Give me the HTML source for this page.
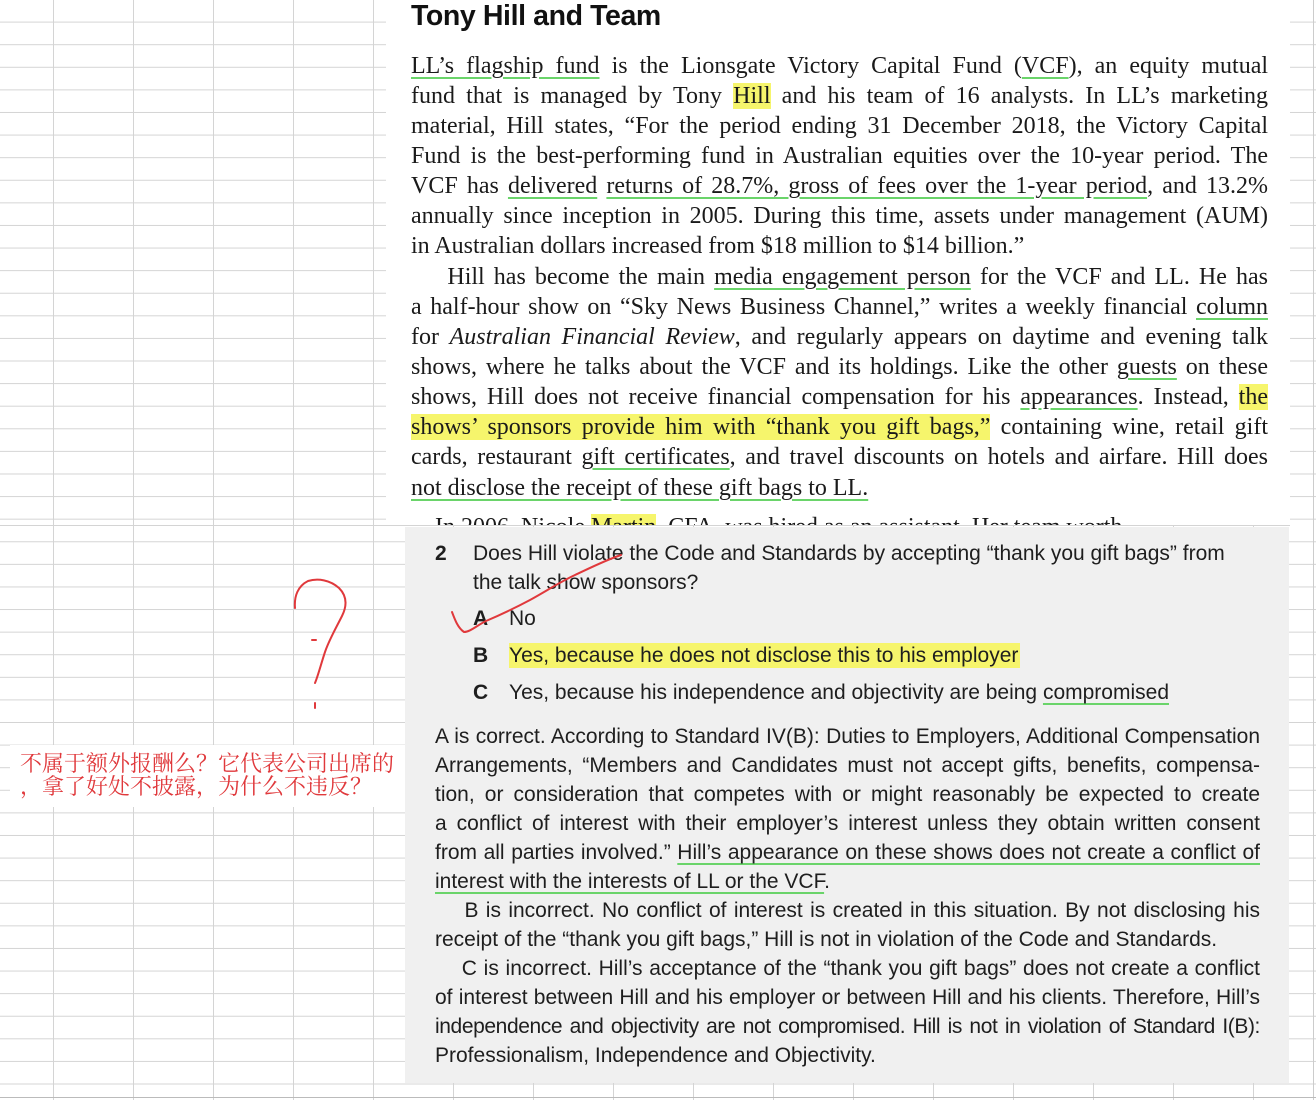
<!DOCTYPE html>
<html><head><meta charset="utf-8"><style>
html,body{margin:0;padding:0}
body{width:1316px;height:1100px;position:relative;overflow:hidden;background-color:#fff;
background-image:linear-gradient(to right,transparent 53px,#d4d4d4 53px,#d4d4d4 54px,transparent 54px),linear-gradient(to bottom,transparent 21.6px,#d4d4d4 21.6px,#d4d4d4 22.6px,transparent 22.6px);
background-size:80px 100%,100% 22.6px;}
.top{position:absolute;left:386px;top:0;width:904px;height:525px;background:#fff;}
.panel{position:absolute;left:405px;top:527px;width:884px;height:556px;background:#f0f0f0;}
.s{position:absolute;left:411px;width:857px;font-family:"Liberation Serif",serif;font-size:24px;color:#1a1a1a;white-space:nowrap;line-height:30px;height:30px}
.j{text-align:justify;text-align-last:justify;white-space:normal}
.m{position:absolute;font-family:"Liberation Sans",sans-serif;font-size:21px;color:#1e1e1e;white-space:nowrap;line-height:29px;height:29px}
.mj{left:435px;width:825px;text-align:justify;text-align-last:justify;white-space:normal}
.u{text-decoration:underline;text-decoration-color:#6ad46a;text-decoration-thickness:2px;text-underline-offset:4px}
.h{background:#f6f56c}
.lb{font-weight:bold;position:absolute;left:473px}
.zh{position:absolute;left:20px;font-family:"Noto Serif CJK SC","WenQuanYi Zen Hei",serif;font-size:22px;color:#e0393c;white-space:nowrap;line-height:23px}
</style></head><body>
<div style="position:absolute;right:2px;top:0;width:1px;height:1100px;background:#ccc"></div>
<div style="position:absolute;left:0;top:1097px;width:1316px;height:1px;background:#bbb"></div>
<div class="top"></div>
<div style="position:absolute;left:411px;top:0px;font-family:'Liberation Sans',sans-serif;font-weight:bold;font-size:28.5px;color:#111;letter-spacing:-0.4px">Tony Hill and Team</div>
<div class="s j" style="top:51px"><span class="u">LL’s flagship fund</span> is the Lionsgate Victory Capital Fund (<span class="u">VCF</span>), an equity mutual</div>
<div class="s j" style="top:81px">fund that is managed by Tony <span class="h">Hill</span> and his team of 16 analysts. In LL’s marketing</div>
<div class="s j" style="top:111px">material, Hill states, “For the period ending 31 December 2018, the Victory Capital</div>
<div class="s j" style="top:141px">Fund is the best-performing fund in Australian equities over the 10-year period. The</div>
<div class="s j" style="top:171px">VCF has <span class="u">delivered</span> <span class="u">returns of 28.7%, gross of fees over the 1-year period</span>, and 13.2%</div>
<div class="s j" style="top:201px">annually since inception in 2005. During this time, assets under management (AUM)</div>
<div class="s" style="top:231px">in Australian dollars increased from $18 million to $14 billion.”</div>
<div class="s j" style="top:262px">&nbsp;&nbsp;&nbsp;&nbsp;Hill has become the main <span class="u">media engagement person</span> for the VCF and LL. He has</div>
<div class="s j" style="top:292px">a half-hour show on “Sky News Business Channel,” writes a weekly financial <span class="u">column</span></div>
<div class="s j" style="top:322px">for <i>Australian Financial Review</i>, and regularly appears on daytime and evening talk</div>
<div class="s j" style="top:352px">shows, where he talks about the VCF and its holdings. Like the other <span class="u">guests</span> on these</div>
<div class="s j" style="top:382px">shows, Hill does not receive financial compensation for his <span class="u">appearances</span>. Instead, <span class="h">the</span></div>
<div class="s j" style="top:412px"><span class="h">shows’ sponsors provide him with “thank you gift bags,”</span> containing wine, retail gift</div>
<div class="s j" style="top:442px">cards, restaurant <span class="u">gift certificates</span>, and travel discounts on hotels and airfare. Hill does</div>
<div class="s" style="top:473px"><span class="u">not disclose the receipt of these gift bags to LL.</span></div>
<div style="position:absolute;left:386px;top:512px;width:904px;height:13px;overflow:hidden"><div class="s" style="left:25px;top:0;line-height:30px">&nbsp;&nbsp;&nbsp;&nbsp;In 2006, Nicole <span class="h">Martin</span>, CFA, was hired as an assistant. Her team worth</div></div>
<div style="position:absolute;left:0;top:525px;width:1290px;height:1px;background:#d4d4d4"></div>
<div class="panel"></div>
<div class="m" style="left:435px;top:539px;font-weight:bold">2</div>
<div class="m" style="left:473px;top:539px">Does Hill violate the Code and Standards by accepting “thank you gift bags” from</div>
<div class="m" style="left:473px;top:568px">the talk show sponsors?</div>
<div class="m lb" style="top:604px">A</div><div class="m" style="left:509px;top:604px">No</div>
<div class="m lb" style="top:641px">B</div><div class="m" style="left:509px;top:641px"><span class="h" style="padding:1px 2px 1px 0">Yes, because he does not disclose this to his employer</span></div>
<div class="m lb" style="top:678px">C</div><div class="m" style="left:509px;top:678px">Yes, because his independence and objectivity are being <span class="u">compromised</span></div>
<div class="m mj" style="top:722px">A is correct. According to Standard IV(B): Duties to Employers, Additional Compensation</div>
<div class="m mj" style="top:751px">Arrangements, “Members and Candidates must not accept gifts, benefits, compensa-</div>
<div class="m mj" style="top:780px">tion, or consideration that competes with or might reasonably be expected to create</div>
<div class="m mj" style="top:809px">a conflict of interest with their employer’s interest unless they obtain written consent</div>
<div class="m mj" style="top:838px">from all parties involved.” <span class="u">Hill’s appearance on these shows does not create a conflict of</span></div>
<div class="m" style="left:435px;top:867px"><span class="u">interest with the interests of LL or the VCF</span>.</div>
<div class="m mj" style="top:896px">&nbsp;&nbsp;&nbsp;&nbsp;B is incorrect. No conflict of interest is created in this situation. By not disclosing his</div>
<div class="m" style="left:435px;top:925px">receipt of the “thank you gift bags,” Hill is not in violation of the Code and Standards.</div>
<div class="m mj" style="top:954px">&nbsp;&nbsp;&nbsp;&nbsp;C is incorrect. Hill’s acceptance of the “thank you gift bags” does not create a conflict</div>
<div class="m mj" style="top:983px">of interest between Hill and his employer or between Hill and his clients. Therefore, Hill’s</div>
<div class="m mj" style="top:1012px;letter-spacing:-0.4px;word-spacing:-1px">independence and objectivity are not compromised. Hill is not in violation of Standard I(B):</div>
<div class="m" style="left:435px;top:1041px">Professionalism, Independence and Objectivity.</div>
<div style="position:absolute;left:10px;top:745px;width:395px;height:62px;background:#fff"></div>
<div class="zh" style="top:751px">不属于额外报酬么？它代表公司出席的</div>
<div class="zh" style="top:774px">，拿了好处不披露，为什么不违反？</div>
<svg style="position:absolute;left:0;top:0" width="1316" height="1100">
<g fill="none" stroke="#e0393c" stroke-width="2" stroke-linecap="round" stroke-linejoin="round">
<path d="M295,608 C294,596 298,586 308,581 C318,578 330,580 339,588 C347,596 347,606 342,616 C336,628 329,640 325,652 C321,664 318,676 315,683"/>
<path d="M312,640 L316,640"/>
<path d="M315,703 L315,708"/>
<path d="M452,612 C455,620 458,628 464,632 C470,632 476,626 486,621 C500,615 515,608 530,600 C548,590 560,582 575,575 C592,567 606,560 621,555"/>
</g></svg>
</body></html>
